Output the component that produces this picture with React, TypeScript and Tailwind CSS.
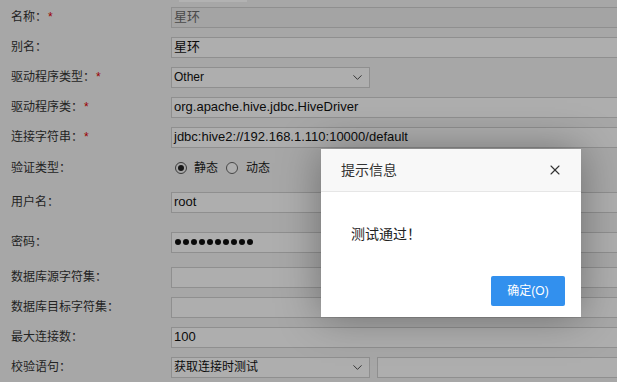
import React from 'react';
import { ChevronDown, X } from 'lucide-react';

const cn = "font-['Liberation_Sans','Noto_Sans_CJK_SC',sans-serif]";

const Label = ({ text, required }: { text: string; required?: boolean }) => (
  <div className="w-[171px] shrink-0 pl-[11px] text-[12px] text-[#333]">
    {text}：{required && <span className="text-[#d00] ml-[1px]">*</span>}
  </div>
);

const Input = ({ value, disabled, className = '' }: { value?: string; disabled?: boolean; className?: string }) => (
  <div
    className={`h-[21px] w-[470px] shrink-0 border border-[#cdcdcd] flex items-center px-[2px] text-[13px] ${
      disabled ? 'bg-[#ebebeb] text-[#6a6a6a]' : 'bg-[#fafafa] text-[#111]'
    } ${className}`}
  >
    {value}
  </div>
);

const Select = ({ value }: { value: string }) => (
  <div className="h-[21px] w-[199px] shrink-0 border border-[#cdcdcd] bg-[#fafafa] flex items-center justify-between pl-[2px] pr-[4px] text-[12px] text-[#111]">
    <span>{value}</span>
    <ChevronDown size={15} strokeWidth={1.3} className="text-[#222]" />
  </div>
);

const Row = ({ h, children }: { h: string; children: React.ReactNode }) => (
  <div className={`flex items-center ${h}`}>{children}</div>
);

export default function App() {
  return (
    <div className={`relative w-[617px] h-[382px] overflow-hidden bg-[#f0f0f0] ${cn}`}>
      <div className="h-[2px] w-[68px] ml-[179px] bg-white" />

      <Row h="h-[30px]">
        <Label text="名称" required />
        <Input value="星环" disabled />
      </Row>
      <Row h="h-[30px]">
        <Label text="别名" />
        <Input value="星环" />
      </Row>
      <Row h="h-[30px]">
        <Label text="驱动程序类型" required />
        <Select value="Other" />
      </Row>
      <Row h="h-[30px]">
        <Label text="驱动程序类" required />
        <Input value="org.apache.hive.jdbc.HiveDriver" />
      </Row>
      <Row h="h-[30px]">
        <Label text="连接字符串" required />
        <Input value="jdbc:hive2://192.168.1.110:10000/default" />
      </Row>
      <Row h="h-[32px]">
        <Label text="验证类型" />
        <div className="flex items-center text-[12px] text-[#222] ml-[4px]">
          <span className="w-[12px] h-[12px] rounded-full border border-[#555] flex items-center justify-center">
            <span className="w-[6px] h-[6px] rounded-full bg-[#222]" />
          </span>
          <span className="ml-[7px]">静态</span>
          <span className="ml-[8px] w-[12px] h-[12px] rounded-full border border-[#666] bg-[#fafafa]" />
          <span className="ml-[8px]">动态</span>
        </div>
      </Row>
      <Row h="h-[36px]">
        <Label text="用户名" />
        <Input value="root" />
      </Row>
      <Row h="h-[44px]">
        <Label text="密码" />
        <div className="h-[21px] w-[470px] shrink-0 border border-[#cdcdcd] bg-[#fafafa] flex items-center gap-[2px] px-[3px]">
          {Array.from({ length: 10 }).map((_, i) => (
            <span key={i} className="w-[6px] h-[6px] rounded-full bg-[#111]" />
          ))}
        </div>
      </Row>
      <Row h="h-[26px]">
        <Label text="数据库源字符集" />
        <Input />
      </Row>
      <Row h="h-[34px]">
        <Label text="数据库目标字符集" />
        <Input />
      </Row>
      <Row h="h-[26px]">
        <Label text="最大连接数" />
        <Input value="100" />
      </Row>
      <Row h="h-[34px]">
        <Label text="校验语句" />
        <Select value="获取连接时测试" />
        <Input className="ml-[7px] h-[20px]" />
      </Row>

      {/* overlay */}
      <div className="absolute inset-0 bg-black/30" />

      {/* dialog */}
      <div className="absolute left-[321px] top-[149px] w-[260px] h-[168px] bg-white shadow-[0_0_40px_rgba(0,0,0,0.35)] flex flex-col">
        <div className="h-[43px] bg-[#f8f8f8] border-b border-[#e6e6e6] flex items-center justify-between pl-[20px] pr-[18px]">
          <span className="text-[14px] text-[#333]">提示信息</span>
          <X size={16} strokeWidth={1.6} className="text-[#333]" />
        </div>
        <div className="flex-1 flex flex-col">
          <div className="pl-[30px] pt-[32px] text-[14px] text-[#222]">测试通过！</div>
          <div className="mt-auto mb-[11px] mr-[16px] flex justify-end">
            <button className="w-[74px] h-[30px] rounded-[2px] bg-[#3290ee] text-white text-[12px]">确定(O)</button>
          </div>
        </div>
      </div>
    </div>
  );
}
